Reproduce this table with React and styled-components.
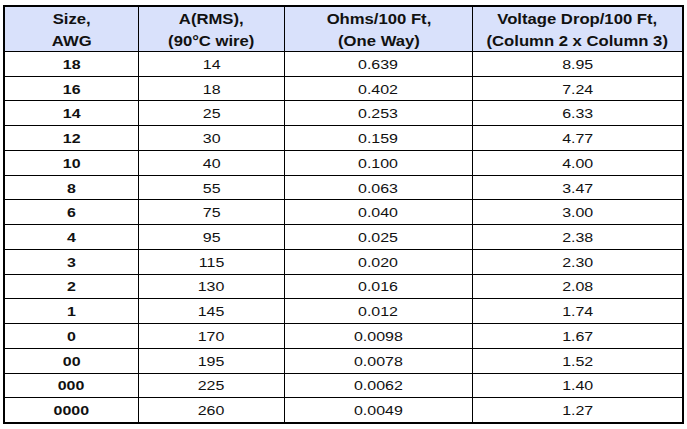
import React from 'react';
import styled, { createGlobalStyle } from 'styled-components';

const rows = [
  ['18', '14', '0.639', '8.95'],
  ['16', '18', '0.402', '7.24'],
  ['14', '25', '0.253', '6.33'],
  ['12', '30', '0.159', '4.77'],
  ['10', '40', '0.100', '4.00'],
  ['8', '55', '0.063', '3.47'],
  ['6', '75', '0.040', '3.00'],
  ['4', '95', '0.025', '2.38'],
  ['3', '115', '0.020', '2.30'],
  ['2', '130', '0.016', '2.08'],
  ['1', '145', '0.012', '1.74'],
  ['0', '170', '0.0098', '1.67'],
  ['00', '195', '0.0078', '1.52'],
  ['000', '225', '0.0062', '1.40'],
  ['0000', '260', '0.0049', '1.27'],
];

const headers = [
  ['Size,', 'AWG'],
  ['A(RMS),', '(90°C wire)'],
  ['Ohms/100 Ft,', '(One Way)'],
  ['Voltage Drop/100 Ft,', '(Column 2 x Column 3)'],
];

export default function App() {
  return (
    <>
      <GlobalStyle />
      <Page>
        <Table>
          <Row>
            {headers.map(([a, b]) => (
              <HeadCell key={a}>
                <Stretch $scale={1.19}>
                  {a}
                  <br />
                  {b}
                </Stretch>
              </HeadCell>
            ))}
          </Row>
          {rows.map((r) => (
            <Row key={r[0]}>
              {r.map((v, i) => (
                <Cell key={i} $bold={i === 0}>
                  <Stretch $scale={1.33}>{v}</Stretch>
                </Cell>
              ))}
            </Row>
          ))}
        </Table>
      </Page>
    </>
  );
}

const GlobalStyle = createGlobalStyle`
body {
  margin: 0;
  background: #ffffff;
  font-family: 'Liberation Sans', Arial, sans-serif;
}
`
const Page = styled.div`
padding: 5px 0 0 3px;
`
const Table = styled.div`
display: grid;
grid-template-columns: 133px 145px 187px 209px;
grid-template-rows: 44px repeat(15, 1fr);
gap: 1px;
width: max-content;
height: 415px;
background: #000;
border: 2px solid #000;
`
const Row = styled.div`
display: contents;
`
const Cell = styled.div`
display: flex;
align-items: center;
justify-content: center;
padding-top: 2px;
background: #ffffff;
color: #111;
font-size: 12px;
font-weight: ${(p) => (p.$bold ? 700 : 400)};
`
const HeadCell = styled.div`
display: flex;
align-items: center;
justify-content: center;
padding-top: 2px;
background: #d9e1fb;
color: #111;
font-size: 14px;
font-weight: 700;
line-height: 22px;
text-align: center;
`
const Stretch = styled.span`
display: inline-block;
transform: scaleX(${(p) => p.$scale});
white-space: nowrap;
`
